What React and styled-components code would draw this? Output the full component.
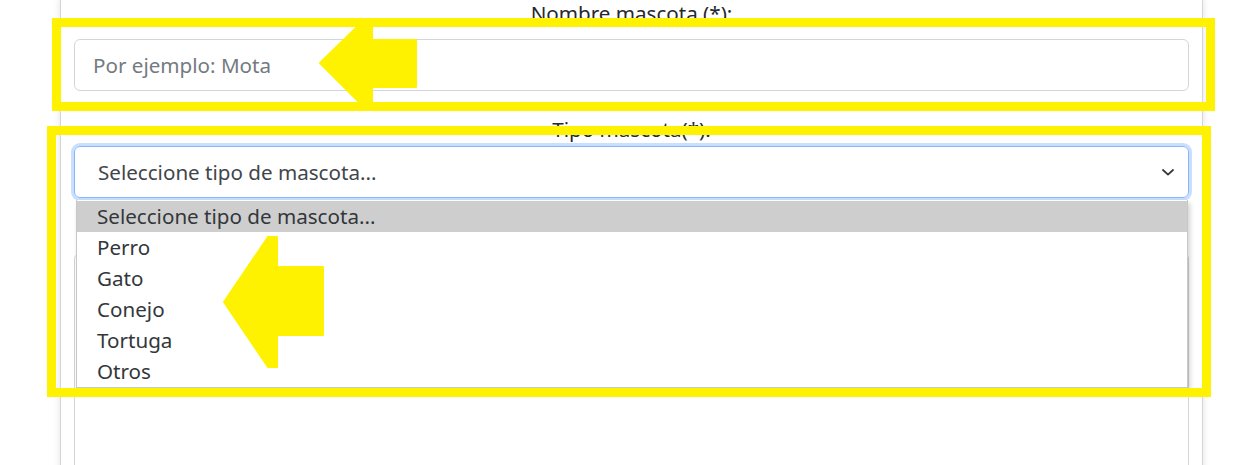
import React from "react";
import styled, { createGlobalStyle } from "styled-components";

const GlobalStyle = createGlobalStyle`
  body {
    margin: 0;
    background: #ffffff;
    font-family: "Noto Sans", "Open Sans", "Liberation Sans", sans-serif;
    overflow: hidden;
  }
`;

const options = ["Perro", "Gato", "Conejo", "Tortuga", "Otros"];

export default function App() {
  return (
    <>
      <GlobalStyle />
      <Page>
        <Card>
          <Label>Nombre mascota (*):</Label>
          <Input placeholder="Por ejemplo: Mota" readOnly />

          <Label $spaced>Tipo mascota(*):</Label>
          <SelectWrap>
            <Select>
              <span>Seleccione tipo de mascota...</span>
              <Chevron viewBox="0 0 12 7">
                <path d="M1 1 L6 5.6 L11 1" />
              </Chevron>
            </Select>
            <Dropdown>
              <Option $active>Seleccione tipo de mascota...</Option>
              {options.map((o) => (
                <Option key={o}>{o}</Option>
              ))}
            </Dropdown>
          </SelectWrap>

          <Label $spaced>Observaciones:</Label>
          <TextArea />
        </Card>

        <Highlight style={{ left: 52, top: 18, width: 1163, height: 93 }} />
        <Highlight style={{ left: 47, top: 126, width: 1164, height: 271 }} />

        <Arrow style={{ left: 316, top: 20 }} width="104" height="88" viewBox="316 20 104 88">
          <polygon points="320,63 360,24 372,24 372,40 416,40 416,87 372,87 372,103 360,103" />
        </Arrow>
        <Arrow style={{ left: 220, top: 233 }} width="107" height="138" viewBox="220 233 107 138">
          <polygon points="224,302 268,237 277,237 277,267 323,267 323,335 277,335 277,367 268,367" />
        </Arrow>
      </Page>
    </>
  );
}

const Page = styled.div`
  position: relative;
  height: 465px;
  overflow: hidden;
  padding-left: 60px;
`;

const Card = styled.div`
  box-sizing: border-box;
  width: 1143px;
  min-height: 480px;
  margin-top: -2px;
  padding: 0 13px;
  background: #fff;
  border-left: 1px solid #d6d6d6;
  border-right: 1px solid #d6d6d6;
  box-shadow: 0 0 7px rgba(0, 0, 0, 0.12);
  display: flex;
  flex-direction: column;
`;

const Label = styled.div`
  text-align: center;
  font-size: 20.6px;
  line-height: 30px;
  color: #25292d;
  margin-top: ${(p) => (p.$spaced ? "23px" : "0")};
  margin-bottom: ${(p) => (p.$spaced ? "2px" : "11px")};
`;

const Input = styled.input`
  box-sizing: border-box;
  width: 100%;
  height: 52px;
  padding: 0 18px;
  font-family: inherit;
  font-size: 20.6px;
  color: #212529;
  border: 1px solid #d2d6da;
  border-radius: 6px;
  outline: none;

  &::placeholder {
    color: #737a81;
  }
`;

const SelectWrap = styled.div`
  position: relative;
`;

const Select = styled.div`
  box-sizing: border-box;
  height: 52px;
  padding: 0 14px 0 23px;
  display: flex;
  align-items: center;
  justify-content: space-between;
  font-size: 20.6px;
  color: #41464b;
  border: 1px solid #86b7fe;
  border-radius: 6px;
  box-shadow: 0 0 0 3px rgba(13, 110, 253, 0.22);
`;

const Chevron = styled.svg`
  width: 12px;
  height: 7px;
  fill: none;
  stroke: #343a40;
  stroke-width: 1.8;
  stroke-linecap: round;
  stroke-linejoin: round;
`;

const Dropdown = styled.div`
  position: absolute;
  top: 54px;
  left: 2px;
  right: 1px;
  z-index: 2;
  background: #fff;
  border: 1px solid #c8c8c8;
  border-top: none;
  padding-top: 1px;
  box-shadow: 2px 3px 5px rgba(0, 0, 0, 0.18);
`;

const Option = styled.div`
  height: 31px;
  line-height: 31px;
  padding-left: 20px;
  font-size: 20.6px;
  color: #33373b;
  background: ${(p) => (p.$active ? "#cecece" : "#fff")};
`;

const TextArea = styled.div`
  box-sizing: border-box;
  height: 260px;
  border: 1px solid #d2d6da;
  border-radius: 6px;
`;

const Highlight = styled.div`
  position: absolute;
  box-sizing: border-box;
  border: 9px solid #fff200;
  z-index: 5;
  pointer-events: none;
`;

const Arrow = styled.svg`
  position: absolute;
  z-index: 6;
  fill: #fff200;
  stroke: #fff200;
  stroke-width: 2;
  stroke-linejoin: round;
`;
